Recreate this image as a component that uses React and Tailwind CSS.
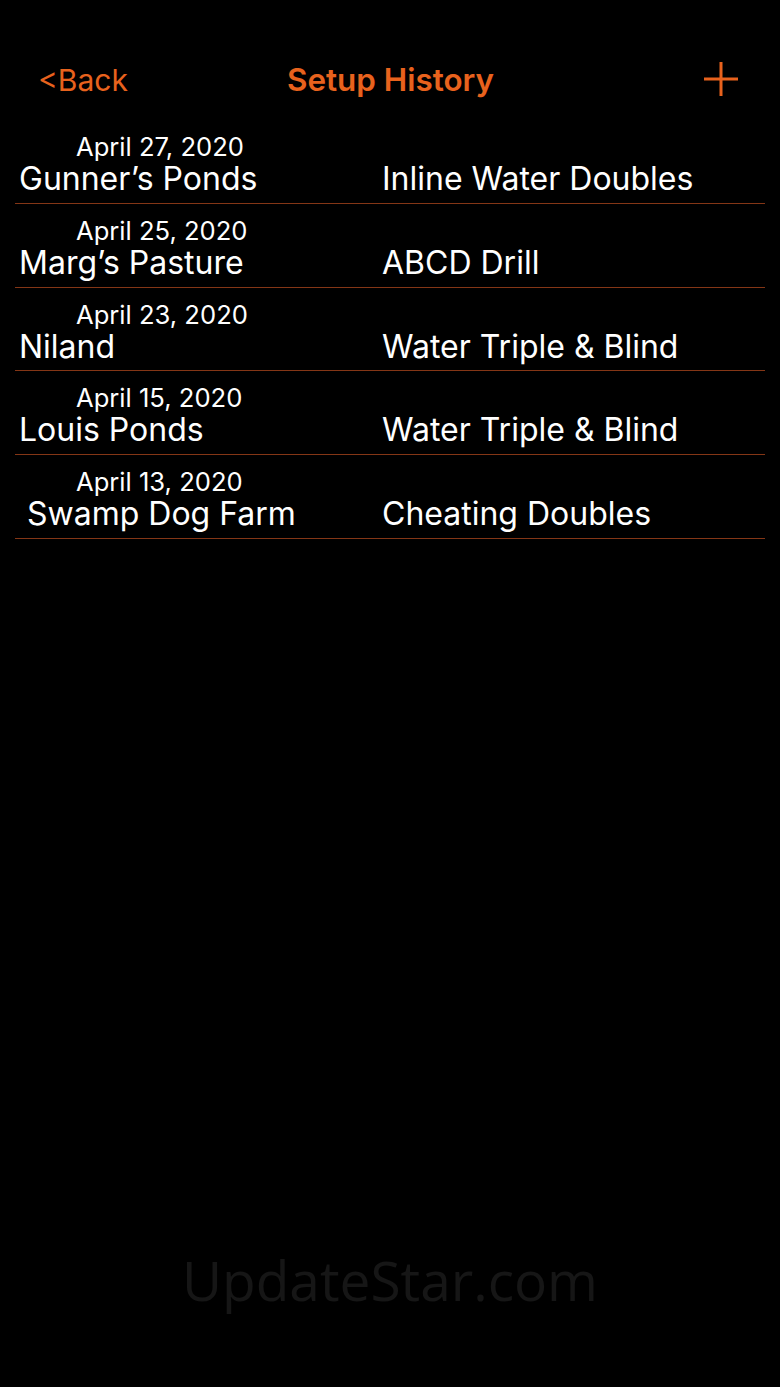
import React from 'react'

const SETUPS = [
  { date: 'April 27, 2020', place: 'Gunner’s Ponds', drill: 'Inline Water Doubles', h: 'h-[84px]' },
  { date: 'April 25, 2020', place: 'Marg’s Pasture', drill: 'ABCD Drill', h: 'h-[84px]' },
  { date: 'April 23, 2020', place: 'Niland', drill: 'Water Triple & Blind', h: 'h-[83px]' },
  { date: 'April 15, 2020', place: 'Louis Ponds', drill: 'Water Triple & Blind', h: 'h-[84px]' },
  { date: 'April 13, 2020', place: 'Swamp Dog Farm', drill: 'Cheating Doubles', h: 'h-[84px]', indent: true },
]

function SetupRow({ item }) {
  return (
    <div className={`${item.h} flex flex-col`}>
      <div className="pl-[61px] pt-[12px] text-[25.6px] leading-[30px] text-white">{item.date}</div>
      <div className="flex text-[32px] leading-[34px] text-white">
        <span className={`w-[367px] ${item.indent ? 'pl-[12px]' : 'pl-[4px]'}`}>{item.place}</span>
        <span>{item.drill}</span>
      </div>
      <div className="mt-auto h-px bg-[#843616]" />
    </div>
  )
}

export default function App() {
  return (
    <div className="w-[780px] h-[1387px] bg-black flex flex-col font-['Inter',sans-serif]">
      <div className="h-[120px] flex items-start pt-[60px] px-[38px]">
        <span className="text-[#e8621d] text-[30px] leading-[40px]">&lt;Back</span>
        <span className="flex-1 text-center text-[#e8621d] text-[31.4px] leading-[40px] font-semibold pr-[50px]">
          Setup History
        </span>
        <svg width="36" height="36" viewBox="0 0 36 36" className="mt-[1px] mr-[3px]">
          <path d="M18 1v34M1 18h34" stroke="#e8621d" strokeWidth="3" fill="none" />
        </svg>
      </div>
      <div className="mx-[15px]">
        {SETUPS.map((item) => (
          <SetupRow key={item.date} item={item} />
        ))}
      </div>
      <div className="flex-1 flex items-end justify-center pb-[66px]">
        <span className="text-[#161616] text-[55px] font-['Open_Sans',sans-serif]">UpdateStar.com</span>
      </div>
    </div>
  )
}
